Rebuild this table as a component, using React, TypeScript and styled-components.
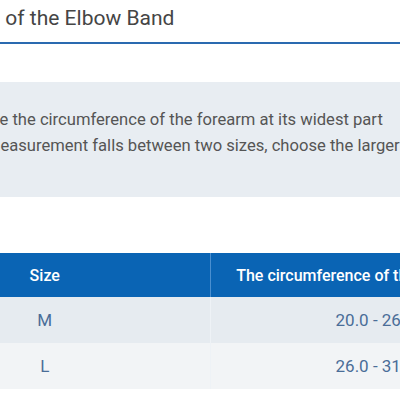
import styled, { createGlobalStyle } from "styled-components";

const GlobalStyle = createGlobalStyle`
  html, body {
    margin: 0;
    padding: 0;
    background: #ffffff;
    overflow: hidden;
  }

  body {
    font-family: Roboto, "Liberation Sans", sans-serif;
  }
`;

const sizes = [
  { size: "M", range: "20.0 - 26.0" },
  { size: "L", range: "26.0 - 31.0" },
];

const App = () => {
  return (
    <>
      <GlobalStyle />
      <Page>
        <Title>Choose the Size of the Elbow Band</Title>

        <Notice>
          <NoticeLine>Measure the circumference of the forearm at its widest part</NoticeLine>
          <NoticeLine>If the measurement falls between two sizes, choose the larger one</NoticeLine>
        </Notice>

        <Table>
          <thead>
            <tr>
              <HeadCell>Size</HeadCell>
              <HeadCell>The circumference of the forearm (cm)</HeadCell>
            </tr>
          </thead>
          <tbody>
            {sizes.map((row, i) => (
              <Row key={row.size} $odd={i % 2 === 0}>
                <Cell>{row.size}</Cell>
                <Cell>{row.range}</Cell>
              </Row>
            ))}
          </tbody>
        </Table>
      </Page>
    </>
  );
};

// the screenshot is cut from a wider page, so the page starts left of the window
const Page = styled.div`
  width: 760px;
  margin-left: -152px;
`;

const Title = styled.h2`
  margin: 4px 0 0;
  padding: 0 0 10px 2px;
  font-size: 21px;
  line-height: 28px;
  font-weight: 400;
  color: #454545;
  border-bottom: 2px solid #2a6ab0;
`;

const Notice = styled.div`
  margin-top: 38px;
  padding: 25px 0 38px 96px;
  background: #e8edf2;
`;

const NoticeLine = styled.p`
  margin: 0;
  font-size: 16.6px;
  line-height: 26px;
  color: #555555;
  white-space: nowrap;
`;

const Table = styled.table`
  margin: 56px 0 0 32px;
  width: 660px;
  border-collapse: collapse;
  table-layout: fixed;
`;

const HeadCell = styled.th`
  height: 44px;
  padding: 0;
  background: #0a64b4;
  color: #ffffff;
  font-size: 16px;
  font-weight: 500;
  text-align: center;
  white-space: nowrap;

  & + & {
    border-left: 1px solid #4a8fd0;
  }
`;

const Row = styled.tr<{ $odd: boolean }>`
  background: ${(p) => (p.$odd ? "#e6ebf0" : "#f2f4f6")};
`;

const Cell = styled.td`
  height: 46px;
  padding: 0;
  font-size: 17px;
  color: #4a6d98;
  text-align: center;

  & + & {
    border-left: 1px solid #eef2f6;
  }
`;

export default App;
